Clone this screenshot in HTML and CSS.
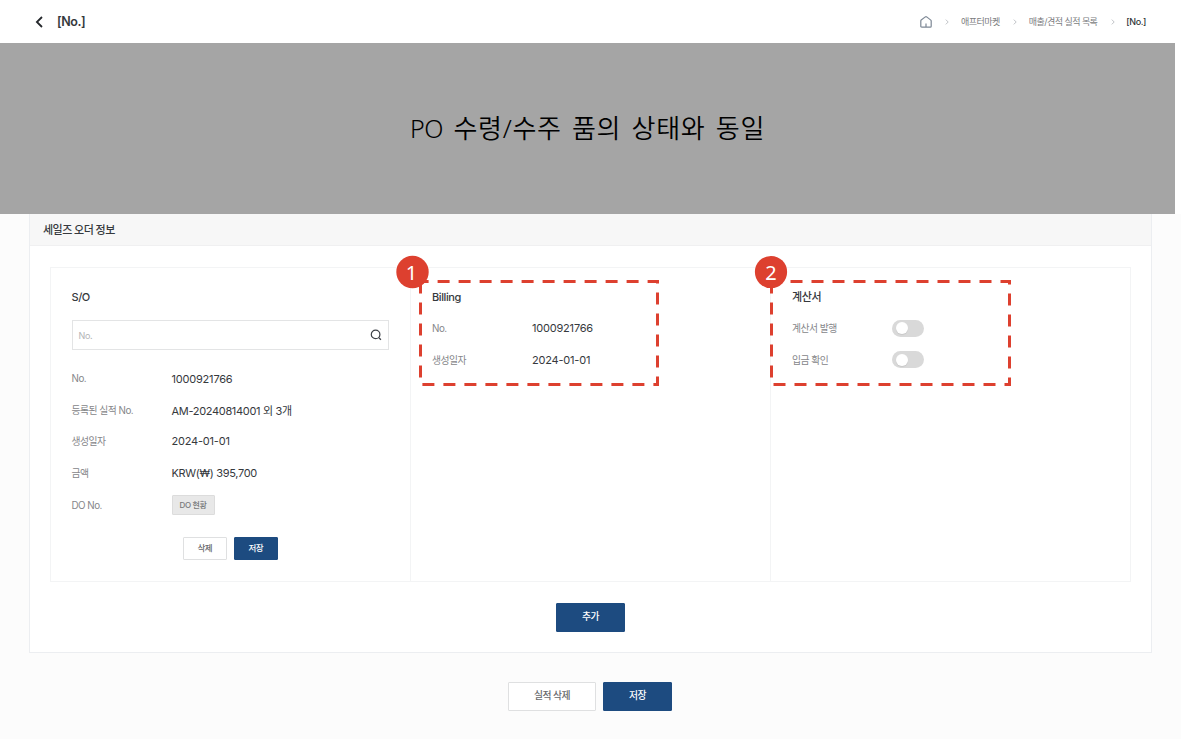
FILE: index.html
```html
<!DOCTYPE html>
<html lang="ko">
<head>
<meta charset="utf-8">
<title>[No.]</title>
<link rel="stylesheet" href="styles.css">
</head>
<body>
<header class="topbar">
  <div class="topbar-title">
    <svg class="back" viewBox="0 0 10 14" width="10" height="14"><path d="M8 2 L2.9 7 L8 12" fill="none" stroke="#25282c" stroke-width="1.8"/></svg>
    <h1>[No.]</h1>
  </div>
  <nav class="crumbs">
    <svg class="home" viewBox="0 0 12 12" width="12" height="12"><path d="M.8 4.9 Q.8 4.4 1.2 4.1 L5.3.9 Q6 .4 6.7.9 L10.8 4.1 Q11.2 4.4 11.2 4.9 V10.2 Q11.2 11.2 10.2 11.2 H1.8 Q.8 11.2 .8 10.2 Z M6 7.6 V11" fill="none" stroke="#7d8895" stroke-width="1.2"/></svg>
    <svg class="sep" viewBox="0 0 4 6" width="4" height="6"><path d="M.8.6 L3.2 3 L.8 5.4" fill="none" stroke="#c0c3c7" stroke-width="1"/></svg>
    <span class="crumb">애프터마켓</span>
    <svg class="sep" viewBox="0 0 4 6" width="4" height="6"><path d="M.8.6 L3.2 3 L.8 5.4" fill="none" stroke="#c0c3c7" stroke-width="1"/></svg>
    <span class="crumb crumb-list">매출/견적 실적 목록</span>
    <svg class="sep" viewBox="0 0 4 6" width="4" height="6"><path d="M.8.6 L3.2 3 L.8 5.4" fill="none" stroke="#c0c3c7" stroke-width="1"/></svg>
    <span class="crumb current">[No.]</span>
  </nav>
</header>
<section class="banner"><p><span class="po">PO</span> 수령/수주 품의 상태와 동일</p></section>
<main class="page">
  <section class="card">
    <h2 class="card-head">세일즈 오더 정보</h2>
    <div class="card-body">
      <div class="columns">
        <div class="col">
          <h3>S/O</h3>
          <div class="search">
            <span>No.</span>
            <svg viewBox="0 0 12 12" width="12" height="12"><circle cx="5.6" cy="5.4" r="4.3" fill="none" stroke="#3c4046" stroke-width="1.2"/><path d="M8.8 8.6 L10.9 10.7" stroke="#3c4046" stroke-width="1.3"/></svg>
          </div>
          <dl class="rows">
            <dt>No.</dt><dd>1000921766</dd>
            <dt>등록된 실적 No.</dt><dd class="record">AM-20240814001 외 3개</dd>
            <dt>생성일자</dt><dd>2024-01-01</dd>
            <dt>금액</dt><dd class="amount">KRW(₩) 395,700</dd>
            <dt class="tall">DO No.</dt><dd class="tall"><button class="btn status">DO 현황</button></dd>
          </dl>
          <div class="actions">
            <button class="btn small">삭제</button>
            <button class="btn small primary">저장</button>
          </div>
        </div>
        <div class="col">
          <h3 class="latin">Billing</h3>
          <dl class="rows compact">
            <dt>No.</dt><dd>1000921766</dd>
            <dt>생성일자</dt><dd>2024-01-01</dd>
          </dl>
        </div>
        <div class="col">
          <h3>계산서</h3>
          <dl class="rows compact">
            <dt>계산서 발행</dt><dd><span class="toggle"></span></dd>
            <dt>입금 확인</dt><dd><span class="toggle"></span></dd>
          </dl>
        </div>
      </div>
      <div class="add"><button class="btn large primary">추가</button></div>
    </div>
  </section>
  <div class="footer">
    <button class="btn large wide">실적 삭제</button>
    <button class="btn large primary">저장</button>
  </div>
</main>
<svg class="notes" viewBox="0 0 1181 739" width="1181" height="739">
  <g fill="none" stroke="#dd402f" stroke-width="3" stroke-dasharray="12 9">
    <path d="M420.5 281.5 H657.5 V384.5 H420.5 Z" stroke-dashoffset="3.9"/>
    <path d="M771.5 281.5 H1009.5 V384.5 H771.5 Z" stroke-dashoffset="2"/>
  </g>
  <circle cx="412.5" cy="272" r="16.2" fill="#dd402f"/>
  <circle cx="771" cy="272" r="16.1" fill="#dd402f"/>
  <text x="411.4" y="279.5">1</text>
  <text x="771" y="279.5">2</text>
</svg>
</body>
</html>
```

FILE: styles.css
```css
* { box-sizing: border-box; }
body {
  margin: 0;
  height: 739px;
  overflow: hidden;
  display: flex;
  flex-direction: column;
  background: #fff;
  color: #36393d;
  font-family: Inter, "Noto Sans CJK KR", sans-serif;
  font-size: 11px;
}
h1, h2, h3, p, dl, dd { margin: 0; }
svg { display: block; flex: none; }

.topbar {
  height: 43px;
  flex: none;
  display: flex;
  justify-content: space-between;
  align-items: center;
  padding: 0 35px 0 34px;
}
.topbar-title { display: flex; align-items: center; gap: 13px; }
.topbar h1 { font-size: 12.5px; font-weight: 600; letter-spacing: -0.5px; line-height: 18px; }
.crumbs { display: flex; align-items: center; font-size: 9px; color: #7b7d80; white-space: nowrap; }
.sep { margin: 0 11.6px 0 13.4px; }
.crumb { letter-spacing: -0.5px; line-height: 14px; }
.crumb-list { letter-spacing: -0.55px; }
.current { color: #303337; font-weight: 500; letter-spacing: -0.4px; }

.banner {
  width: 1175px;
  height: 171px;
  flex: none;
  display: flex;
  align-items: center;
  justify-content: center;
  padding-bottom: 4px;
  background: #a5a5a5;
  color: #000;
  font-family: "Noto Sans", "Noto Sans CJK KR", sans-serif;
  font-size: 26px;
  font-weight: 350;
  letter-spacing: 0.7px;
  word-spacing: 2.9px;
}
.po { font-size: 25px; letter-spacing: -0.4px; }

.page { flex: 1; background: #fcfcfc; padding: 0 29px; }
.card { height: 439px; background: #fff; border: 1px solid #eceef1; border-top: 0; }
.card-head {
  height: 32px;
  padding: 1px 13px 0;
  background: #f7f7f7;
  border-bottom: 1px solid #f0f0f1;
  font-size: 11px;
  font-weight: 500;
  line-height: 31px;
  letter-spacing: -0.55px;
}
.card-body { padding: 21px 20px 0; }
.columns {
  display: grid;
  grid-template-columns: 359.5px 360px 1fr;
  height: 315px;
  border: 1px solid #f3f4f5;
}
.col { padding: 20px 20.5px 0; border-right: 1px solid #f3f4f5; }
.col + .col { padding-left: 21.5px; }
.col:last-child { border-right: 0; }
h3 { font-size: 11px; font-weight: 500; line-height: 18px; letter-spacing: -0.4px; }
.latin { letter-spacing: -0.4px; }
.search {
  height: 30px;
  margin-top: 14px;
  padding: 0 6px;
  display: flex;
  align-items: center;
  justify-content: space-between;
  border: 1px solid #e3e4e5;
  font-size: 9px;
  letter-spacing: -0.3px;
  color: #b3b4b6;
}
.rows {
  display: grid;
  grid-template-columns: 100px 1fr;
  grid-auto-rows: 31.4px;
  align-items: center;
  margin-top: 13px;
  white-space: nowrap;
}
.rows.compact { margin-top: 6.5px; }
dt { font-size: 9.8px; color: #858689; letter-spacing: -0.5px; }
dd { font-size: 11px; letter-spacing: -0.2px; display: flex; }
.record, .amount { letter-spacing: -0.32px; }
.tall { padding-top: 2px; }
.btn {
  display: block;
  padding: 0;
  border: 1px solid #dfe0e1;
  border-radius: 1px;
  background: #fff;
  color: #66686b;
  font: 500 9px/1 Inter, "Noto Sans CJK KR", sans-serif;
  letter-spacing: -0.5px;
}
.status { width: 43px; height: 20px; background: #e8e8e8; border-color: #dcdcdc; font-size: 8px; letter-spacing: -0.4px; color: #77787a; }
.actions { display: flex; justify-content: center; gap: 7px; margin-top: 17px; }
.small { width: 44px; height: 23px; font-size: 8.5px; }
.large { width: 69px; height: 29px; padding-bottom: 1px; font-size: 9.8px; }
.wide { width: 88px; }
.primary { background: #1d4b80; border-color: #1d4b80; color: #fff; }
.toggle { width: 32px; height: 17px; padding: 2.5px 4px; border-radius: 9px; background: #d9d9d9; }
.toggle::before {
  content: "";
  display: block;
  width: 12px;
  height: 12px;
  border-radius: 50%;
  background: #fff;
  box-shadow: 0 1px 1px rgba(0, 0, 0, .08);
}
.add { display: flex; justify-content: center; margin-top: 21px; }
.footer { display: flex; justify-content: center; gap: 7px; margin-top: 28.5px; padding-right: 1px; }

.notes { position: absolute; left: 0; top: 0; pointer-events: none; }
.notes text {
  font-family: "Noto Sans", sans-serif;
  font-size: 20px;
  fill: #fff;
  text-anchor: middle;
}
```
